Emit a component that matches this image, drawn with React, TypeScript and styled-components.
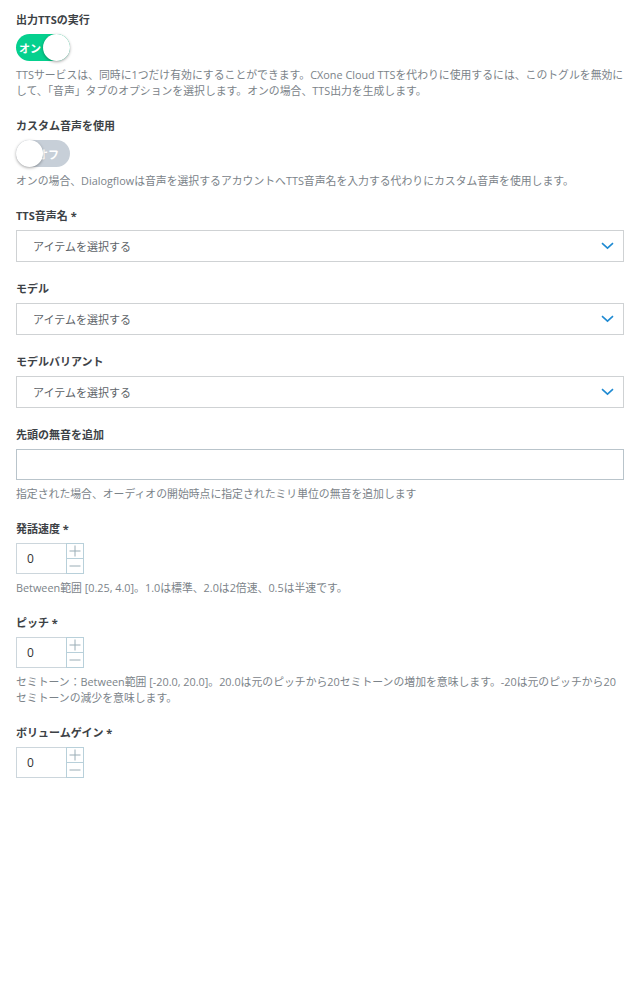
import React from 'react';
import styled, {createGlobalStyle} from 'styled-components';

const GlobalStyle = createGlobalStyle`
  body {
    margin: 0;
    background: #fff;
    font-family: "Open Sans", "Noto Sans CJK JP", sans-serif;
  }
`;

const Page = styled.div`
  padding: 12px 11px 40px 16px;
  display: flex;
  flex-direction: column;
  gap: 19px;
`;

const Field = styled.div`
  display: flex;
  flex-direction: column;
  align-items: flex-start;
`;

const Label = styled.div`
  font-size: 11px;
  line-height: 16px;
  font-weight: 700;
  color: #3d4246;
  margin-bottom: 6px;
`;

const Help = styled.div`
  font-size: 10.85px;
  line-height: 16px;
  color: #7b8389;
  margin-top: 6px;
  width: 100%;
`;

const Track = styled.div<{$on: boolean}>`
  position: relative;
  width: 54px;
  height: 27px;
  border-radius: 14px;
  background: ${(p) => (p.$on ? '#05d08e' : '#c7cfd8')};
  display: flex;
  align-items: center;
  justify-content: ${(p) => (p.$on ? 'flex-start' : 'flex-end')};
  padding: ${(p) => (p.$on ? '0 0 0 3px' : '0 11px 0 0')};
  box-sizing: border-box;
  font-size: 11px;
  font-weight: 700;
  color: #fff;
`;

const Knob = styled.span<{$on: boolean}>`
  position: absolute;
  top: 0;
  left: ${(p) => (p.$on ? '27px' : '0')};
  width: 27px;
  height: 27px;
  border-radius: 50%;
  background: #fff;
  box-shadow: 0 1px 3px rgba(0, 0, 0, 0.35);
`;

const Toggle = ({on}: {on: boolean}) => (
  <Track $on={on}>
    {on ? 'オン' : 'オフ'}
    <Knob $on={on} />
  </Track>
);

const SelectBox = styled.div`
  width: 100%;
  height: 32px;
  box-sizing: border-box;
  border: 1px solid #cfd2d4;
  display: flex;
  align-items: center;
  justify-content: space-between;
  padding: 0 9px 0 16px;
  font-size: 11px;
  color: #5d6368;
`;

const Select = () => (
  <SelectBox>
    アイテムを選択する
    <svg width="13" height="8" viewBox="0 0 13 8">
      <path d="M1 1.2 L6.5 6.2 L12 1.2" fill="none" stroke="#1f8ad2" strokeWidth="1.6" />
    </svg>
  </SelectBox>
);

const TextInput = styled.div`
  width: 100%;
  height: 31px;
  box-sizing: border-box;
  border: 1px solid #b9c4cb;
`;

const Number = styled.div`
  display: flex;
  height: 31px;
`;

const NumberValue = styled.div`
  width: 50px;
  box-sizing: border-box;
  border: 1px solid #ccd6dc;
  border-right: none;
  display: flex;
  align-items: center;
  padding-left: 10px;
  font-size: 12px;
  color: #333;
`;

const Steps = styled.div`
  display: flex;
  flex-direction: column;
  width: 18px;
  border: 1px solid #b8d0da;
  box-sizing: border-box;
`;

const Step = styled.div<{$top?: boolean}>`
  flex: 1;
  display: flex;
  align-items: center;
  justify-content: center;
  border-top: ${(p) => (p.$top ? 'none' : '1px solid #b8d0da')};
`;

const Plus = () => (
  <svg width="12" height="12" viewBox="0 0 12 12">
    <path d="M6 0.5 V11.5 M0.5 6 H11.5" stroke="#9aadb6" strokeWidth="1" />
  </svg>
);

const Minus = () => (
  <svg width="12" height="12" viewBox="0 0 12 12">
    <path d="M0.5 6 H11.5" stroke="#9aadb6" strokeWidth="1" />
  </svg>
);

const NumberInput = ({value}: {value: string}) => (
  <Number>
    <NumberValue>{value}</NumberValue>
    <Steps>
      <Step $top>
        <Plus />
      </Step>
      <Step>
        <Minus />
      </Step>
    </Steps>
  </Number>
);

export default function App() {
  return (
    <>
      <GlobalStyle />
      <Page>
        <Field>
          <Label>出力TTSの実行</Label>
          <Toggle on />
          <Help>
            TTSサービスは、同時に1つだけ有効にすることができます。CXone Cloud TTSを代わりに使用するには、このトグルを無効にして、「音声」タブのオプションを選択します。オンの場合、TTS出力を生成します。
          </Help>
        </Field>
        <Field>
          <Label>カスタム音声を使用</Label>
          <Toggle on={false} />
          <Help>オンの場合、Dialogflowは音声を選択するアカウントへTTS音声名を入力する代わりにカスタム音声を使用します。</Help>
        </Field>
        <Field>
          <Label>TTS音声名 *</Label>
          <Select />
        </Field>
        <Field>
          <Label>モデル</Label>
          <Select />
        </Field>
        <Field>
          <Label>モデルバリアント</Label>
          <Select />
        </Field>
        <Field>
          <Label>先頭の無音を追加</Label>
          <TextInput />
          <Help>指定された場合、オーディオの開始時点に指定されたミリ単位の無音を追加します</Help>
        </Field>
        <Field>
          <Label>発話速度 *</Label>
          <NumberInput value="0" />
          <Help>Between範囲 [0.25, 4.0]。1.0は標準、2.0は2倍速、0.5は半速です。</Help>
        </Field>
        <Field>
          <Label>ピッチ *</Label>
          <NumberInput value="0" />
          <Help>
            セミトーン：Between範囲 [-20.0, 20.0]。20.0は元のピッチから20セミトーンの増加を意味します。-20は元のピッチから20セミトーンの減少を意味します。
          </Help>
        </Field>
        <Field>
          <Label>ボリュームゲイン *</Label>
          <NumberInput value="0" />
        </Field>
      </Page>
    </>
  );
}
